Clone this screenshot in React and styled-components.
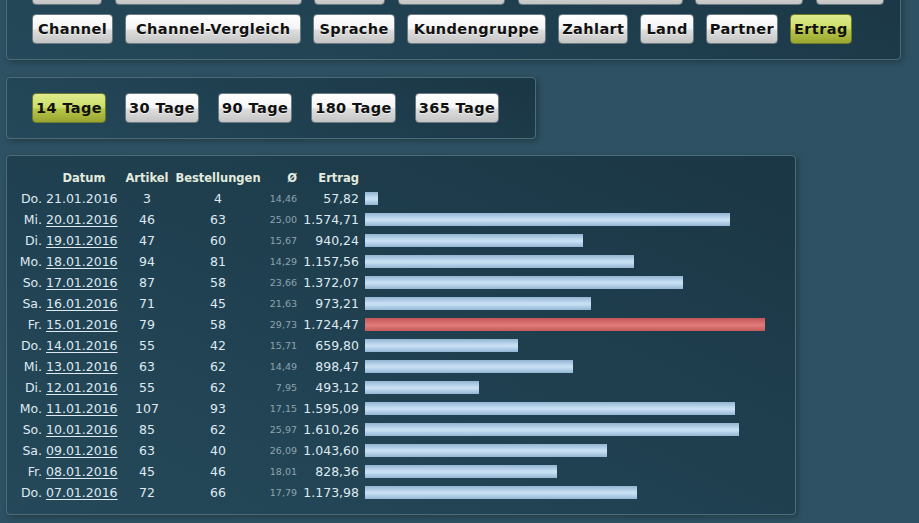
import React from "react";
import styled, { createGlobalStyle, css } from "styled-components";

const GlobalStyle = createGlobalStyle`
  html, body {
    margin: 0;
    padding: 0;
    background: #2e5263;
    overflow: hidden;
  }
  body {
    font-family: "DejaVu Sans", Verdana, sans-serif;
  }
`;

const Page = styled.div`
  display: flex;
  flex-direction: column;
  align-items: flex-start;
  gap: 16px;
  padding: 0 6px;
  width: 919px;
  height: 523px;
  box-sizing: border-box;
  background: #2e5263;
`;

const Panel = styled.section`
  box-sizing: border-box;
  width: ${(p) => p.$width}px;
  border: 1px solid #4c6c7a;
  border-radius: 4px;
  background: linear-gradient(25deg, #25495a 0%, #1f3f4f 55%, #1b3644 100%);
  box-shadow: 2px 2px 6px rgba(0, 0, 0, 0.3);
`;

/* the page is scrolled a little, so the first row of the menu sits above the fold */
const NavPanel = styled(Panel)`
  margin-top: -41px;
  padding: 15px 16px 15px 25px;
  display: flex;
  flex-direction: column;
  gap: 9px;
`;

const RangePanel = styled(Panel)`
  margin-top: 1px;
  padding: 15px 16px 15px 25px;
  display: flex;
  gap: 19px;
`;

const ButtonRow = styled.div`
  display: flex;
  gap: ${(p) => p.$gap ?? 12}px;
`;

const Button = styled.button`
  box-sizing: border-box;
  height: 30px;
  ${(p) =>
    p.$w
      ? css`
          width: ${p.$w}px;
          padding: 0;
        `
      : css`
          padding: 0 ${p.$pad ?? 5}px;
        `}
  border: 1px solid #6b7b82;
  border-radius: 4px;
  font-family: "DejaVu Sans", sans-serif;
  font-weight: bold;
  font-size: 14.5px;
  letter-spacing: 0.4px;
  color: #111;
  text-shadow: 0 1px 0 rgba(255, 255, 255, 0.6);
  cursor: pointer;
  white-space: nowrap;
  background: linear-gradient(
    #ffffff 0%,
    #f4f4f4 48%,
    #dedede 54%,
    #c4c4c4 100%
  );
  ${(p) =>
    p.$active &&
    css`
      border-color: #6f7a2c;
      text-shadow: none;
      background: linear-gradient(
        #dfec8e 0%,
        #ccdc68 48%,
        #b7c64a 54%,
        #98a630 100%
      );
    `}
`;

const TablePanel = styled(Panel)`
  height: 360px;
  padding: 11px 5px 0 5px;
`;

const GridRow = styled.div`
  display: grid;
  grid-template-columns: 30px 80px 50px 92px 33px 62px 1fr;
  height: 21px;
  align-items: center;
  font-size: 12.5px;
  color: #dfe9f1;
  white-space: nowrap;
`;

const HeadCell = styled.div`
  font-weight: bold;
  font-size: 11.5px;
  color: #e3ebde;
  text-align: ${(p) => p.$align || "center"};
  padding-left: ${(p) => p.$pl || 0}px;
`;

const Cell = styled.div`
  text-align: ${(p) => p.$align || "center"};
  padding-left: ${(p) => p.$pl || 0}px;
`;

const DateLink = styled.a`
  color: #dfe9f1;
  text-decoration: ${(p) => (p.$plain ? "none" : "underline")};
  text-underline-offset: 2px;
`;

const Avg = styled(Cell)`
  font-size: 9.5px;
  color: #8ea4b0;
  text-align: right;
`;

const BarCell = styled.div`
  padding-left: 6px;
  display: flex;
  align-items: center;
`;

const Bar = styled.div`
  height: 13px;
  background: ${(p) =>
    p.$top
      ? "linear-gradient(#c35656 0%, #dc7474 45%, #e07c7c 55%, #c45a5a 100%)"
      : "linear-gradient(#92b4d2 0%, #c4ddf2 45%, #c9e1f5 55%, #94b6d4 100%)"};
`;

/* upper menu row: only the lower edge is on screen, labels go to aria-label */
const navTop = [
  ["Umsatz", 70],
  ["Umsatz-Entwicklung", 187],
  ["Artikel", 71],
  ["Kategorie", 107],
  ["Hersteller-Report", 165],
  ["Versandart", 108],
  ["Kunde", 68],
];

const navBottom = [
  ["Channel", 5],
  ["Channel-Vergleich", 10],
  ["Sprache", 5],
  ["Kundengruppe", 6],
  ["Zahlart", 3],
  ["Land", 5],
  ["Partner", 3],
  ["Ertrag", 3],
];

const ranges = ["14 Tage", "30 Tage", "90 Tage", "180 Tage", "365 Tage"];

const rows = [
  ["Do.", "21.01.2016", 3, 4, "14,46", 57.82],
  ["Mi.", "20.01.2016", 46, 63, "25,00", 1574.71],
  ["Di.", "19.01.2016", 47, 60, "15,67", 940.24],
  ["Mo.", "18.01.2016", 94, 81, "14,29", 1157.56],
  ["So.", "17.01.2016", 87, 58, "23,66", 1372.07],
  ["Sa.", "16.01.2016", 71, 45, "21,63", 973.21],
  ["Fr.", "15.01.2016", 79, 58, "29,73", 1724.47],
  ["Do.", "14.01.2016", 55, 42, "15,71", 659.8],
  ["Mi.", "13.01.2016", 63, 62, "14,49", 898.47],
  ["Di.", "12.01.2016", 55, 62, "7,95", 493.12],
  ["Mo.", "11.01.2016", 107, 93, "17,15", 1595.09],
  ["So.", "10.01.2016", 85, 62, "25,97", 1610.26],
  ["Sa.", "09.01.2016", 63, 40, "26,09", 1043.6],
  ["Fr.", "08.01.2016", 45, 46, "18,01", 828.36],
  ["Do.", "07.01.2016", 72, 66, "17,79", 1173.98],
];

const fmt = (v) =>
  v.toLocaleString("de-DE", { minimumFractionDigits: 2, maximumFractionDigits: 2 });

const BAR_MAX = 400;

export default function App() {
  const max = Math.max(...rows.map((r) => r[5]));
  return (
    <>
      <GlobalStyle />
      <Page>
        <NavPanel $width={895}>
          <ButtonRow $gap={12.7}>
            {navTop.map(([t, w]) => (
              <Button key={t} $w={w} aria-label={t} />
            ))}
          </ButtonRow>
          <ButtonRow>
            {navBottom.map(([t, pad]) => (
              <Button key={t} $pad={pad} $active={t === "Ertrag"}>
                {t}
              </Button>
            ))}
          </ButtonRow>
        </NavPanel>

        <RangePanel $width={530}>
          {ranges.map((t) => (
            <Button key={t} $pad={3} $active={t === "14 Tage"}>
              {t}
            </Button>
          ))}
        </RangePanel>

        <TablePanel $width={790}>
          <GridRow>
            <HeadCell />
            <HeadCell $pl={4}>Datum</HeadCell>
            <HeadCell>Artikel</HeadCell>
            <HeadCell>Bestellungen</HeadCell>
            <HeadCell $align="right">Ø</HeadCell>
            <HeadCell $align="right">Ertrag</HeadCell>
            <HeadCell />
          </GridRow>
          {rows.map(([day, date, art, best, avg, val], i) => (
            <GridRow key={date}>
              <Cell $align="right">{day}</Cell>
              <Cell $align="left" $pl={4}>
                <DateLink href="#" $plain={i === 0}>
                  {date}
                </DateLink>
              </Cell>
              <Cell>{art}</Cell>
              <Cell>{best}</Cell>
              <Avg>{avg}</Avg>
              <Cell $align="right">{fmt(val)}</Cell>
              <BarCell>
                <Bar $top={val === max} style={{ width: Math.round((val / max) * BAR_MAX) }} />
              </BarCell>
            </GridRow>
          ))}
        </TablePanel>
      </Page>
    </>
  );
}
